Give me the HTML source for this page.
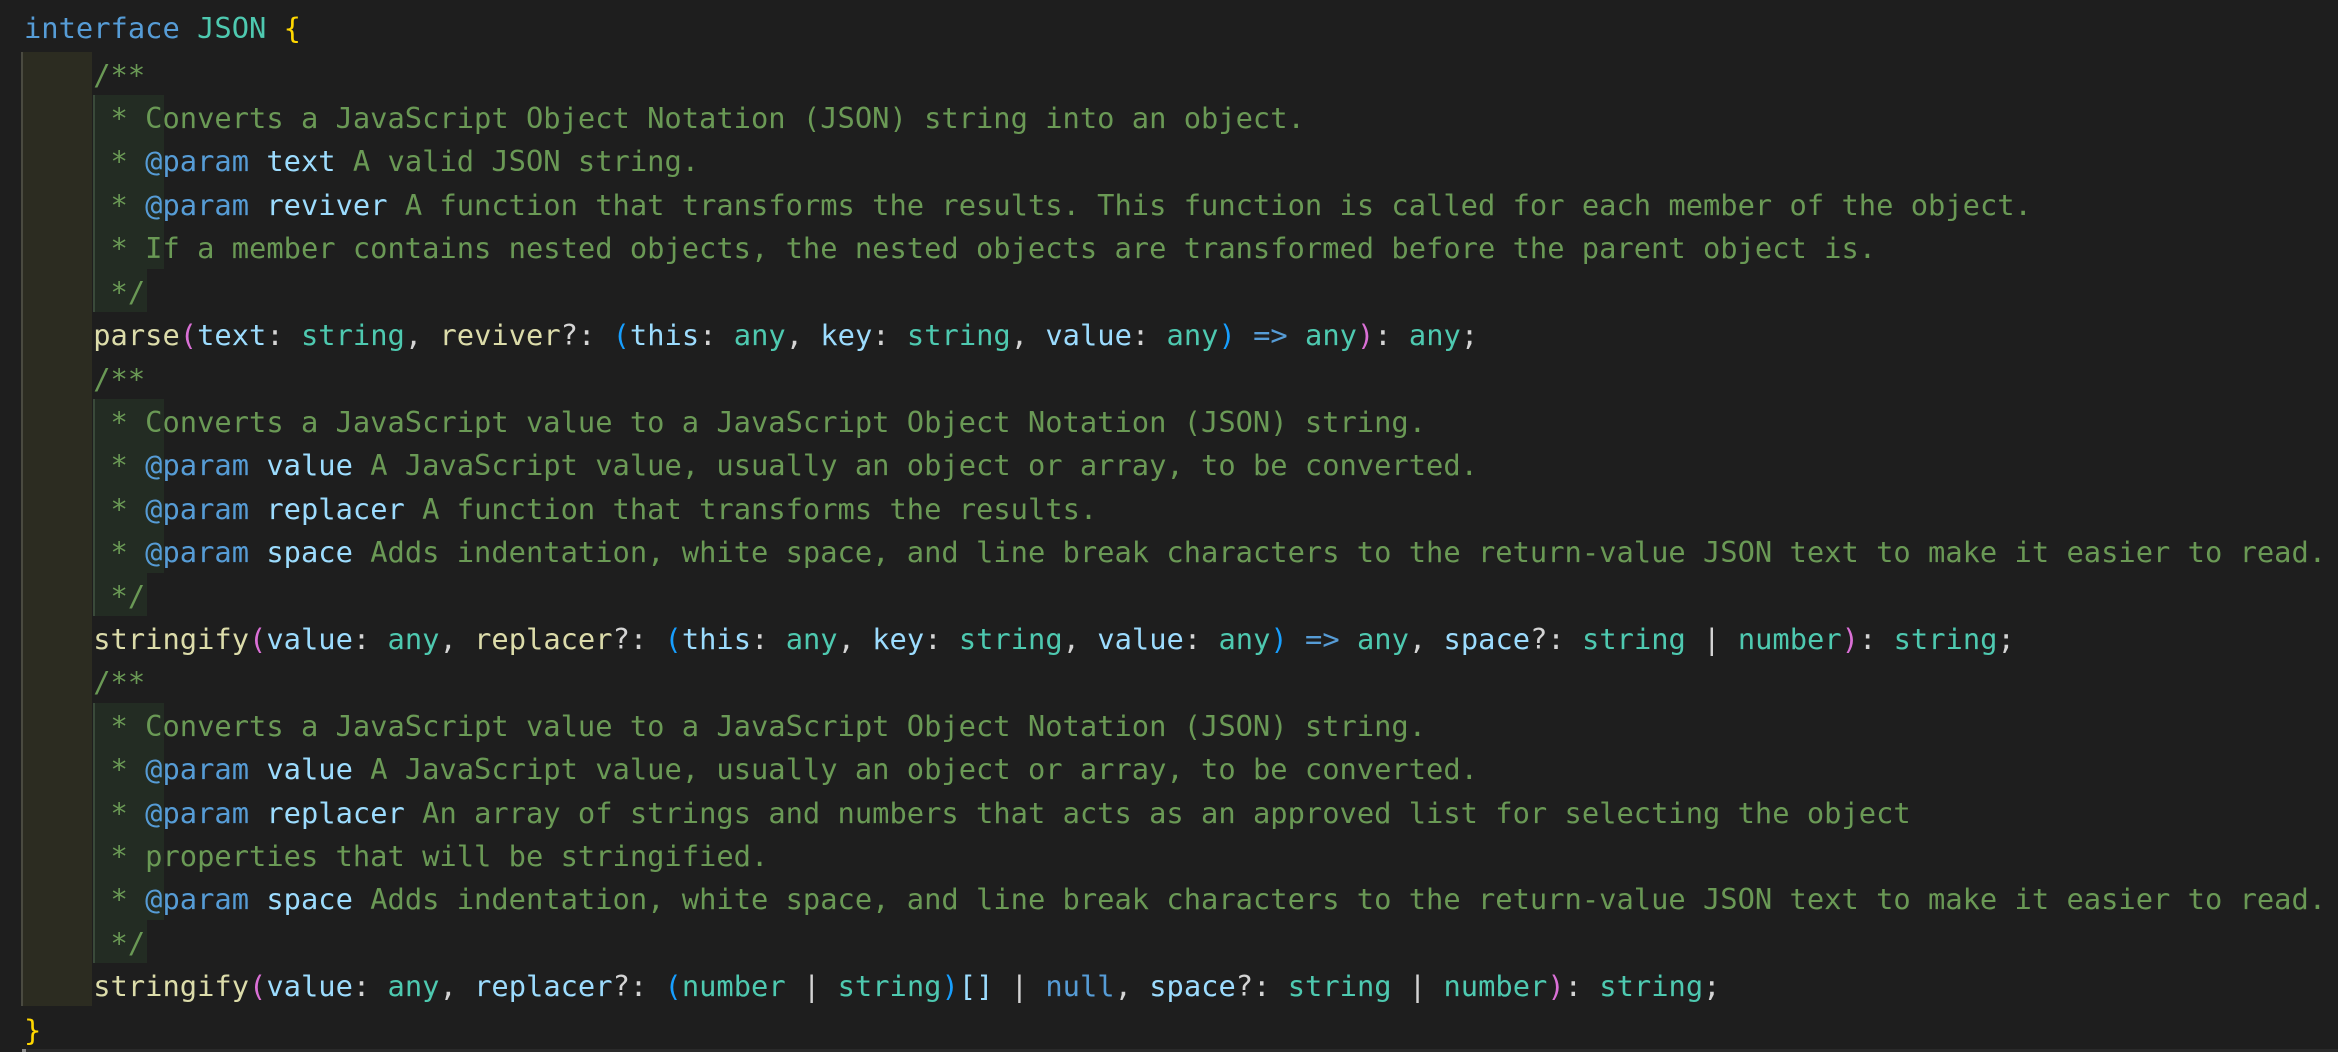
<!DOCTYPE html>
<html><head><meta charset="utf-8"><style>
html,body{margin:0;padding:0;background:#1e1e1e;width:2338px;height:1052px;overflow:hidden;position:relative}
.l{position:absolute;left:24px;height:43px;margin-top:2px;font-family:"DejaVu Sans Mono","Liberation Mono",monospace;font-size:28.75px;line-height:43px;white-space:pre;color:#d4d4d4}
.k{color:#569cd6}.t{color:#4ec9b0}.b{color:#ffd700}.c{color:#6a9955}.p{color:#9cdcfe}.f{color:#dcdcaa}.pk{color:#da70d6}.bl{color:#179fff}
.hl{position:absolute}
</style></head><body>
<div class="hl" style="left:22px;top:52px;width:70px;height:954px;background:#2c2c21"></div>
<div class="hl" style="left:21px;top:52px;width:2px;height:954px;background:#4a4a40"></div>
<div class="hl" style="left:93px;top:95px;width:69px;height:174px;background:#232c23;border-left:2px solid #3a4a3a"></div>
<div class="hl" style="left:93px;top:269px;width:52px;height:43px;background:#232c23;border-left:2px solid #3a4a3a"></div>
<div class="hl" style="left:93px;top:399px;width:69px;height:174px;background:#232c23;border-left:2px solid #3a4a3a"></div>
<div class="hl" style="left:93px;top:573px;width:52px;height:43px;background:#232c23;border-left:2px solid #3a4a3a"></div>
<div class="hl" style="left:93px;top:703px;width:69px;height:217px;background:#232c23;border-left:2px solid #3a4a3a"></div>
<div class="hl" style="left:93px;top:920px;width:52px;height:43px;background:#232c23;border-left:2px solid #3a4a3a"></div>
<div class="hl" style="left:22px;top:1049px;width:2316px;height:3px;background:#2a2a2a"></div>
<div class="hl" style="left:22px;top:1049px;width:4px;height:3px;background:#888"></div>

<div class="l" style="top:7px;margin-top:0"><span class="k">interface</span> <span class="t">JSON</span> <span class="b">{</span></div>
<div class="l" style="top:52px">    <span class="c">/**</span></div>
<div class="l" style="top:95px"><span class="c">     * Converts a JavaScript Object Notation (JSON) string into an object.</span></div>
<div class="l" style="top:138px"><span class="c">     * </span><span class="k">@param</span> <span class="p">text</span><span class="c"> A valid JSON string.</span></div>
<div class="l" style="top:182px"><span class="c">     * </span><span class="k">@param</span> <span class="p">reviver</span><span class="c"> A function that transforms the results. This function is called for each member of the object.</span></div>
<div class="l" style="top:225px"><span class="c">     * If a member contains nested objects, the nested objects are transformed before the parent object is.</span></div>
<div class="l" style="top:269px"><span class="c">     */</span></div>
<div class="l" style="top:312px">    <span class="f">parse</span><span class="pk">(</span><span class="p">text</span>: <span class="t">string</span>, <span class="f">reviver</span>?: <span class="bl">(</span><span class="p">this</span>: <span class="t">any</span>, <span class="p">key</span>: <span class="t">string</span>, <span class="p">value</span>: <span class="t">any</span><span class="bl">)</span> <span class="k">=&gt;</span> <span class="t">any</span><span class="pk">)</span>: <span class="t">any</span>;</div>
<div class="l" style="top:356px">    <span class="c">/**</span></div>
<div class="l" style="top:399px"><span class="c">     * Converts a JavaScript value to a JavaScript Object Notation (JSON) string.</span></div>
<div class="l" style="top:442px"><span class="c">     * </span><span class="k">@param</span> <span class="p">value</span><span class="c"> A JavaScript value, usually an object or array, to be converted.</span></div>
<div class="l" style="top:486px"><span class="c">     * </span><span class="k">@param</span> <span class="p">replacer</span><span class="c"> A function that transforms the results.</span></div>
<div class="l" style="top:529px"><span class="c">     * </span><span class="k">@param</span> <span class="p">space</span><span class="c"> Adds indentation, white space, and line break characters to the return-value JSON text to make it easier to read.</span></div>
<div class="l" style="top:573px"><span class="c">     */</span></div>
<div class="l" style="top:616px">    <span class="f">stringify</span><span class="pk">(</span><span class="p">value</span>: <span class="t">any</span>, <span class="f">replacer</span>?: <span class="bl">(</span><span class="p">this</span>: <span class="t">any</span>, <span class="p">key</span>: <span class="t">string</span>, <span class="p">value</span>: <span class="t">any</span><span class="bl">)</span> <span class="k">=&gt;</span> <span class="t">any</span>, <span class="p">space</span>?: <span class="t">string</span> | <span class="t">number</span><span class="pk">)</span>: <span class="t">string</span>;</div>
<div class="l" style="top:659px">    <span class="c">/**</span></div>
<div class="l" style="top:703px"><span class="c">     * Converts a JavaScript value to a JavaScript Object Notation (JSON) string.</span></div>
<div class="l" style="top:746px"><span class="c">     * </span><span class="k">@param</span> <span class="p">value</span><span class="c"> A JavaScript value, usually an object or array, to be converted.</span></div>
<div class="l" style="top:790px"><span class="c">     * </span><span class="k">@param</span> <span class="p">replacer</span><span class="c"> An array of strings and numbers that acts as an approved list for selecting the object</span></div>
<div class="l" style="top:833px"><span class="c">     * properties that will be stringified.</span></div>
<div class="l" style="top:876px"><span class="c">     * </span><span class="k">@param</span> <span class="p">space</span><span class="c"> Adds indentation, white space, and line break characters to the return-value JSON text to make it easier to read.</span></div>
<div class="l" style="top:920px"><span class="c">     */</span></div>
<div class="l" style="top:963px">    <span class="f">stringify</span><span class="pk">(</span><span class="p">value</span>: <span class="t">any</span>, <span class="p">replacer</span>?: <span class="bl">(</span><span class="t">number</span> | <span class="t">string</span><span class="bl">)</span><span class="p">[]</span> | <span class="k">null</span>, <span class="p">space</span>?: <span class="t">string</span> | <span class="t">number</span><span class="pk">)</span>: <span class="t">string</span>;</div>
<div class="l" style="top:1007px"><span class="b">}</span></div>
</body></html>
